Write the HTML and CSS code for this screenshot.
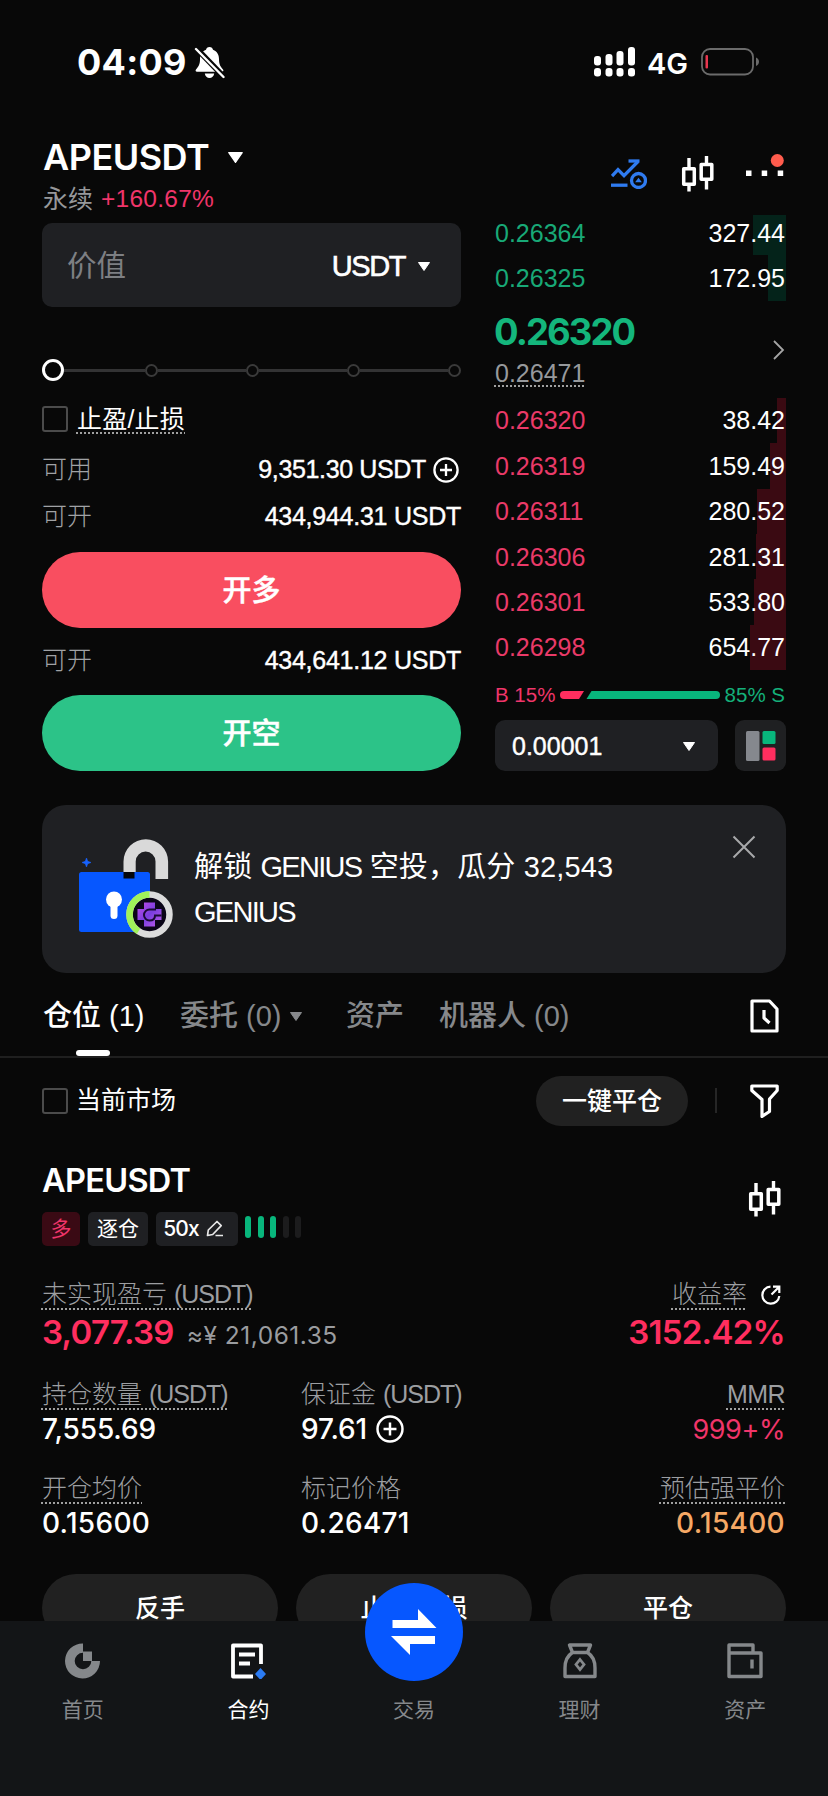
FILE: index.html
```
<!DOCTYPE html>
<html lang="zh-CN">
<head>
<meta charset="utf-8">
<title>APEUSDT 永续</title>
<link rel="stylesheet" href="styles.css">
</head>
<body>
<svg class="defs" width="0" height="0" aria-hidden="true">
  <symbol id="candles" viewBox="0 0 34 36">
    <path d="M8 2v10M8 29v6.500M25.500 0v8M25.500 24v9.500" fill="none" stroke="currentColor" stroke-width="3.400"/>
    <path d="M2.700 12.700h10.600v15.600H2.700zM20.200 8.500h10.600v14.800H20.200z" fill="none" stroke="currentColor" stroke-width="3.500" stroke-linejoin="round"/>
  </symbol>
  <symbol id="plus" viewBox="0 0 26 26">
    <circle cx="13" cy="13" r="11.600" fill="none" stroke="currentColor" stroke-width="2.300"/>
    <path d="M13 7v12M7 13h12" stroke="currentColor" stroke-width="2.300"/>
  </symbol>
  <symbol id="caret" viewBox="0 0 12 9"><path d="M.5.5h11L6 8.500z" fill="currentColor" stroke="currentColor" stroke-linejoin="round"/></symbol>
</svg>
<div class="app">
  <div class="status">
    <span class="time">04:09</span>
    <svg class="bell" width="31" height="33" viewBox="0 0 31 33">
      <path d="M15.500 1c-2 0-3.200 1.300-3.500 2.800C7.800 5.300 6 9 6 13c0 5-1 7-4 10.500-.8 1-.4 2.300 1 2.300h25c1.400 0 1.800-1.300 1-2.300C26 20 25 18 25 13c0-4-1.800-7.700-6-9.200C18.700 2.300 17.500 1 15.500 1z" fill="#fff"/>
      <path d="M10.800 27.500h9.400c-.5 2.800-2.300 4.500-4.700 4.500s-4.200-1.700-4.700-4.500z" fill="#fff"/>
      <path d="M2 2l28 29" stroke="#080808" stroke-width="5.500"/>
      <path d="M2 3l27.500 28" stroke="#fff" stroke-width="2.400" stroke-linecap="round"/>
    </svg>
    <svg class="signal" width="42" height="30" viewBox="0 0 42 30" fill="#fff">
      <rect x="0" y="9" width="7" height="9.500" rx="3"/><rect x="11.500" y="7" width="7" height="11.500" rx="3"/><rect x="22.500" y="4" width="7" height="14.500" rx="3"/><rect x="34" y="0" width="7" height="18.500" rx="3"/>
      <rect x="0" y="21" width="7" height="8.500" rx="3"/><rect x="11.500" y="21" width="7" height="8.500" rx="3"/><rect x="22.500" y="21" width="7" height="8.500" rx="3"/><rect x="34" y="21" width="7" height="8.500" rx="3"/>
    </svg>
    <span class="net">4G</span>
    <svg class="battery" width="59" height="28" viewBox="0 0 59 28">
      <rect x="1" y="1" width="51" height="25.500" rx="8" fill="none" stroke="#6b6b6b" stroke-width="1.800"/>
      <path d="M55 9.500c4 1.500 4 7 0 8.500z" fill="#6b6b6b"/>
      <rect x="4.500" y="7" width="2.500" height="13.500" rx="1" fill="#e8374f"/>
    </svg>
  </div>

  <header class="header">
    <div class="pair">
      <div class="pair-name">APEUSDT <svg class="pair-caret"><use href="#caret"/></svg></div>
      <div class="pair-sub">永续 <span class="red pct">+160.67%</span></div>
    </div>
    <svg class="chart-icon" width="36" height="30" viewBox="0 0 36 30" fill="none" stroke="#2f7bf0" stroke-width="3.300">
      <path d="M1 17l6-6.300 6 6L27 2.500"/><path d="M17.500 2h11"/><path d="M0 26.200h16.500"/><circle cx="27.500" cy="21.500" r="7"/>
      <path d="M27.500 18.800l3.400 4.400h-6.800z" fill="#2f7bf0" stroke="none"/>
    </svg>
    <svg class="candles" width="34" height="36"><use href="#candles"/></svg>
    <svg class="more" width="40" height="24" viewBox="0 0 40 24"><path d="M0 16.500h5.500V22H0zM15.700 16.500h5.500V22h-5.500zM31.700 16.500h5.500V22h-5.500z" fill="#fff"/><circle cx="31.300" cy="6.500" r="6.500" fill="#ff5c4d"/></svg>
  </header>

  <main class="trade">
    <section class="order">
      <div class="input"><span class="ph">价值</span><span class="unit">USDT</span><svg class="caret"><use href="#caret"/></svg></div>
      <div class="slider"><i class="knob"></i><b class="lead"></b><i></i><b></b><i></i><b></b><i></i><b></b><i></i></div>
      <div class="check-row"><i class="box"></i><span class="dotted">止盈/止损</span></div>
      <div class="kv first"><span>可用</span><em>9,351.30 USDT</em><svg class="plus" width="26" height="26"><use href="#plus"/></svg></div>
      <div class="kv"><span>可开</span><em>434,944.31 USDT</em></div>
      <div class="btn long">开多</div>
      <div class="kv after"><span>可开</span><em>434,641.12 USDT</em></div>
      <div class="btn short">开空</div>
    </section>

    <section class="book">
      <div class="lvl bid top"><i style="width:33px"></i><span>0.26364</span><em>327.44</em></div>
      <div class="lvl bid"><i style="width:18px"></i><span>0.26325</span><em>172.95</em></div>
      <div class="mid">
        <div class="prices"><strong>0.26320</strong><span class="dotted">0.26471</span></div>
        <svg width="12" height="20" viewBox="0 0 12 20"><path d="M1 1l9 9-9 9" fill="none" stroke="#a5a5a5" stroke-width="1.800"/></svg>
      </div>
      <div class="lvl ask"><i style="width:9px"></i><span>0.26320</span><em>38.42</em></div>
      <div class="lvl ask"><i style="width:16px"></i><span>0.26319</span><em>159.49</em></div>
      <div class="lvl ask"><i style="width:29px"></i><span>0.26311</span><em>280.52</em></div>
      <div class="lvl ask"><i style="width:30px"></i><span>0.26306</span><em>281.31</em></div>
      <div class="lvl ask"><i style="width:32px"></i><span>0.26301</span><em>533.80</em></div>
      <div class="lvl ask"><i style="width:36px"></i><span>0.26298</span><em>654.77</em></div>
      <div class="ratio">
        <span class="red">B 15%</span>
        <svg width="160" height="8" viewBox="0 0 160 8"><path d="M4 0h20l-5 8H4a4 4 0 0 1 0-8z" fill="#ff2e5f"/><path d="M31.500 0H156a4 4 0 0 1 0 8H26.500z" fill="#08b67c"/></svg>
        <span class="green">85% S</span>
      </div>
      <div class="book-tools">
        <div class="step"><span>0.00001</span><svg class="caret"><use href="#caret"/></svg></div>
        <div class="depth"><svg width="30" height="30" viewBox="0 0 30 30"><rect width="13.500" height="30" rx="1.500" fill="#85888e"/><rect x="16.500" width="13" height="13" rx="1.500" fill="#08b67c"/><rect x="16.500" y="16.500" width="13" height="13" rx="1.500" fill="#ff2e5f"/></svg></div>
      </div>
    </section>
  </main>

  <section class="banner">
    <svg class="lock" width="96" height="102" viewBox="0 0 96 102">
      <defs><linearGradient id="lg" x1="0" y1="0" x2="1" y2="1"><stop offset="0" stop-color="#c04be8"/><stop offset=".5" stop-color="#7a3ee0"/><stop offset="1" stop-color="#c05bea"/></linearGradient></defs>
      <path d="M7.500 19l1.200 3.300L12 23.500l-3.300 1.200-1.200 3.300-1.200-3.300L3 23.500l3.300-1.200z" fill="#1763ff" stroke="#1763ff" stroke-width=".6"/>
      <rect x="0" y="33" width="71" height="60" rx="2.500" fill="#0657ff"/>
      <rect x="44.500" y="33" width="11" height="6.500" fill="#05070c"/>
      <path d="M44.500 33V22.500a22.300 22.300 0 0 1 44.600 0V40H76.500V22.500a9.900 9.900 0 0 0-19.800 0V33z" fill="#d9d9d9"/>
      <circle cx="35" cy="60.500" r="8" fill="#fff"/><rect x="31.500" y="60" width="7" height="20" rx="3.500" fill="#fff"/>
      <circle cx="70.500" cy="75.500" r="20" fill="#0b0618" stroke="#dcdcdc" stroke-width="6.500"/>
      <path d="M70.500 55.500a20 20 0 0 0-11 36.700" fill="none" stroke="#a0f25a" stroke-width="6.500"/>
      <path d="M65 63.500h11v6.500h6.500v11H76v6.500H65V81h-6.500V70H65z" fill="url(#lg)"/>
      <path d="M77 70.500h-6.500a5.500 5.500 0 0 0 0 11c3.500 0 5.500-1.500 5.500-5h6.500" fill="none" stroke="#1b0a38" stroke-width="2"/>
    </svg>
    <p>解锁 <span>GENIUS</span> 空投，瓜分 32,543 <span>GENIUS</span></p>
    <svg class="close" width="24" height="24" viewBox="0 0 24 24"><path d="M1.500 1.500l21 21M22.500 1.500l-21 21" stroke="#a8a9ab" stroke-width="2"/></svg>
  </section>

  <nav class="tabs">
    <span class="tab on">仓位 (1)</span>
    <span class="tab orders">委托 (0) <svg class="caret"><use href="#caret"/></svg></span>
    <span class="tab assets">资产</span>
    <span class="tab">机器人 (0)</span>
    <svg class="history" width="29" height="34" viewBox="0 0 29 34" fill="none" stroke="#fff" stroke-width="3.200" stroke-linejoin="round"><path d="M2 2h17.500L27 10v22H2z"/><path d="M14 11v8l5.500 5"/></svg>
  </nav>

  <div class="filter">
    <i class="box"></i><span class="market">当前市场</span>
    <div class="pill">一键平仓</div>
    <i class="sep"></i>
    <svg width="29" height="34" viewBox="0 0 29 34" fill="none" stroke="#fff" stroke-width="3.200" stroke-linejoin="round"><path d="M1.800 2h25.400v4.500l-7.700 8.500v12.500l-7.500 5V15.500L1.800 6.500z"/></svg>
  </div>

  <section class="position">
    <div class="pos-head">
      <div>
        <h2>APEUSDT</h2>
        <div class="tags">
          <span class="tag side">多</span><span class="tag mode">逐仓</span>
          <span class="tag lev">50x <svg width="18" height="17" viewBox="0 0 18 17" fill="none" stroke="#e8e8e8" stroke-width="1.700" stroke-linejoin="round"><path d="M1.500 15.500l.8-5.500L11 1.500l4.200 4.200-8.500 8.800zM9.500 15.500H17"/></svg></span>
          <span class="adl"><i class="lit"></i><i class="lit"></i><i class="lit"></i><i></i><i></i></span>
        </div>
      </div>
      <svg class="candles" width="34" height="36"><use href="#candles"/></svg>
    </div>

    <div class="pnl">
      <div><label class="dotted">未实现盈亏 <span>(USDT)</span></label><div class="big"><strong>3,077.39</strong><span class="approx">≈¥ 21,061.35</span></div></div>
      <div class="right"><div class="roi"><label class="dotted">收益率</label><svg width="20" height="20" viewBox="0 0 20 20" fill="none" stroke="#fff" stroke-width="2.200"><path d="M9.500 1.700A8.500 8.500 0 1 0 18.300 11M10.500 9.500L17.500 2.500M12 1.700h6.300V8"/></svg></div><div class="big"><strong>3152.42%</strong></div></div>
    </div>

    <div class="stats">
      <div><label class="dotted">持仓数量 <span>(USDT)</span></label><b>7,555.69</b></div>
      <div><label>保证金 <span>(USDT)</span></label><b>97.61 <svg width="28" height="28"><use href="#plus"/></svg></b></div>
      <div class="right"><label class="dotted mmr">MMR</label><b class="red thin">999+%</b></div>
      <div><label class="dotted">开仓均价</label><b class="wide">0.15600</b></div>
      <div><label>标记价格</label><b class="wide">0.26471</b></div>
      <div class="right"><label class="dotted">预估强平价</label><b class="orange wide">0.15400</b></div>
    </div>
    <div class="actions"><span>反手</span><span>止盈/止损</span><span>平仓</span></div>
  </section>

  <footer class="nav">
    <div class="item"><svg width="36" height="36" viewBox="0 0 36 36"><path d="M18 0.500v9.200a8.300 8.300 0 1 0 8.300 8.300H35A17.500 17.500 0 1 1 18 .5z" fill="#85888b"/><path d="M18 8.500h9v9.500h-9z" fill="#85888b"/></svg><span>首页</span></div>
    <div class="item on"><svg width="36" height="36" viewBox="0 0 36 36" fill="none" stroke="#fff" stroke-width="3.800"><path d="M23 33.500H3V2.500h28V21" stroke-linejoin="round"/><path d="M9 11.500h16M9 20.500h11"/><path d="M30.500 25l5.500 6-5.500 6-5.500-6z" fill="#2b7bf3" stroke="none"/></svg><span>合约</span></div>
    <div class="item"><i class="swap"><svg width="48" height="48" viewBox="0 0 48 48" fill="#fff"><path d="M2.500 12h25.500V1L46.500 20H2.500zM45 36H20v11L1 28h44z"/></svg></i><span>交易</span></div>
    <div class="item"><svg width="36" height="36" viewBox="0 0 36 36" fill="none" stroke="#85888b" stroke-width="3.400"><path d="M7.500 2h21L25.500 9.500h-15zM10.500 9.500C5 13 3 19 3 25v8.500h30V25c0-6-2-12-7.500-15.500" stroke-linejoin="round"/><path d="M18 16.500l4 5-4 5-4-5z" stroke-width="2.800"/></svg><span>理财</span></div>
    <div class="item"><svg width="36" height="36" viewBox="0 0 36 36" fill="none" stroke="#85888b" stroke-width="3.400"><path d="M2 10V2h24v8M2 10h32v23.500H2z" stroke-linejoin="round"/><path d="M25 16.500v9"/></svg><span>资产</span></div>
  </footer>
</div>
</body>
</html>
```
FILE: styles.css
```
* { box-sizing: border-box; margin: 0; padding: 0; }
body { background: #080808; }
.defs { position: absolute; }
svg { display: block; flex: none; }
i, em { font-style: normal; }
.app {
  width: 828px; height: 1796px; overflow: hidden;
  background: #080808; color: #fff;
  font-family: "Liberation Sans", "Noto Sans CJK SC", sans-serif;
  font-size: 25px; line-height: 1; white-space: nowrap;
  display: flex; flex-direction: column;
}
.app > * { flex: none; }
.red { color: #f0356a; }
.green { color: #14b07a; }
.orange { color: #f6a865; }
.caret { width: 12px; height: 9px; }
.box { width: 26px; height: 26px; border: 2px solid #4b4b4b; border-radius: 3px; flex: none; }
.dotted { position: relative; }
.dotted::after {
  content: ""; position: absolute; left: -1px; right: 0; bottom: -2px; height: 2px;
  background: repeating-linear-gradient(90deg, #a0a0a0 0 2px, transparent 2px 4px);
}

.status { height: 124px; padding: 0 68px 0 77px; display: flex; align-items: center; font-family: Inter, sans-serif; font-weight: 700; }
.time { font-size: 36px; letter-spacing: 0.3px; width: 117px; }
.bell { margin-right: auto; }
.net { font-size: 29px; font-weight: 600; margin: 2px 13px 0 11px; }

.header { height: 86px; padding: 0 42px 0 43px; display: flex; }
.pair { margin-right: auto; }
.pair-name { display: flex; align-items: center; gap: 19px; height: 66px; font: 600 36px/1 Inter, sans-serif; letter-spacing: -0.500px; }
.pair-caret { width: 15px; height: 11px; }
.pair-sub { display: flex; gap: 8px; align-items: center; height: 18px; color: #96989b; }
.pct { font-size: 24.500px; letter-spacing: 0.250px; }
.chart-icon { margin: 35px 34px 0 0; }
.header .candles { margin: 32px 31px 0 0; }
.more { margin: 30px 0 0; }

.trade { display: flex; padding: 0 42px; justify-content: space-between; }
.order { width: 419px; padding-top: 13px; }
.input { height: 84px; border-radius: 10px; background: #1f2023; display: flex; align-items: center; padding: 2px 31px 0 25px; font-size: 29.500px; }
.ph { color: #7d7f83; margin-right: auto; }
.unit { font-size: 29px; -webkit-text-stroke: .6px #fff; letter-spacing: -1.400px; margin-right: 13px; }
.slider { height: 22px; margin-top: 52px; display: flex; align-items: center; }
.slider i { width: 13px; height: 13px; border: 2.500px solid #3a3a3a; border-radius: 50%; }
.slider .knob { width: 22px; height: 22px; border: 3px solid #fff; }
.slider b { flex: 1; height: 3px; background: #333334; }
.slider .lead { flex: none; width: 81px; }
.check-row { height: 32px; margin-top: 22px; display: flex; align-items: center; gap: 9px; }
.check-row .dotted { letter-spacing: .2px; }
.kv { height: 47px; display: flex; align-items: center; color: #a0a2a5; }
.kv span { margin-right: auto; font-weight: 300; }
.kv em { color: #fff; font-size: 25px; letter-spacing: -0.250px; -webkit-text-stroke: .4px #fff; }
.kv.first { margin-top: 11px; }
.kv.first em { letter-spacing: -0.350px; }
.kv.after { margin-top: 9px; }
.plus { margin: 0 2px 0 7px; color: #fff; }
.btn { height: 76px; border-radius: 38px; display: flex; align-items: center; justify-content: center; font-size: 29px; font-weight: 500; padding-top: 3px; -webkit-text-stroke: .5px #fff; }
.long { background: #f94e60; margin-top: 12px; }
.short { background: #2cc388; margin-top: 11px; }

.book { width: 291px; }
.lvl { height: 45.400px; display: flex; align-items: center; justify-content: space-between; position: relative; padding: 1px 1px 0 0; }
.lvl i { position: absolute; right: 0; top: 0; bottom: 0; }
.lvl.top i { top: 5px; }
.lvl span, .lvl em { position: relative; }
.bid i { background: #04231a; }
.bid span { color: #18a977; }
.ask i { background: #3a0a12; }
.ask span { color: #ea3a68; }
.mid { height: 97px; display: flex; align-items: center; justify-content: space-between; padding: 1px 1px 0 0; }
.prices { display: flex; flex-direction: column; align-items: flex-start; }
.prices strong { font: 700 36.500px/1 Inter, sans-serif; letter-spacing: -1.900px; color: #14b67c; margin: 0 0 10px -1px; }
.prices span { color: #97999c; }
.prices .dotted::after { bottom: -1px; }
.ratio { height: 50px; display: flex; align-items: center; justify-content: space-between; font-size: 20.500px; padding-right: 1px; }
.book-tools { display: flex; justify-content: space-between; }
.step { width: 223px; height: 51px; border-radius: 10px; background: #1f2023; display: flex; align-items: center; justify-content: space-between; padding: 1px 23px 0 17px; -webkit-text-stroke: .4px #fff; }
.depth { width: 51px; height: 51px; border-radius: 9px; background: #1f2022; display: flex; align-items: center; justify-content: center; }

.banner { margin: 34px 42px 0; height: 168px; border-radius: 24px; background: #1f2023; display: flex; padding: 34px 30px 0 37px; }
.banner p { width: 440px; margin: 6px auto 0 19px; font-size: 29px; line-height: 45px; white-space: normal; letter-spacing: .15px; }
.banner p span { letter-spacing: -1.700px; }
.close { margin-top: -4px; }

.tabs { height: 85px; padding: 0 49px 0 43px; display: flex; align-items: center; border-bottom: 2px solid #1f1f1f; font-size: 29px; color: #86888b; }
.tab { display: flex; align-items: center; height: 84px; position: relative; padding-top: 3px; font-weight: 500; gap: 8px; }
.tab.on { color: #fff; width: 137px; }
.tab.on::after { content: ""; position: absolute; left: 33px; bottom: 1px; width: 34px; height: 6px; border-radius: 3px; background: #fff; }
.orders { width: 166px; }
.assets { width: 93px; }
.history { margin: 2px 0 0 auto; }

.filter { height: 85px; padding: 0 49px 0 42px; display: flex; align-items: center; gap: 8px; }
.pill { margin-left: auto; width: 152px; height: 50px; border-radius: 25px; background: #212121; display: flex; align-items: center; justify-content: center; font-weight: 500; padding-top: 1px; }
.sep { width: 2px; height: 25px; background: #262626; margin: 0 25px 0 19px; }

.position { padding: 0 43px 0 42px; }
.pos-head { height: 134px; display: flex; justify-content: space-between; padding-right: 3px; }
.pos-head h2 { font: 600 32.500px/1 Inter, sans-serif; letter-spacing: -0.700px; margin-top: 22px; }
.pos-head .candles { margin-top: 38px; }
.tags { display: flex; align-items: center; margin-top: 14px; gap: 8px; font-size: 21px; }
.tag { height: 34px; border-radius: 5px; background: #1f2023; display: flex; align-items: center; justify-content: center; gap: 7px; }
.side { width: 38px; background: #3a0a14; color: #f0356a; }
.mode { width: 60px; }
.lev { width: 82px; font: 500 21px/1 Inter, sans-serif; letter-spacing: -0.900px; padding-right: 7px; }
.adl { display: flex; gap: 6.500px; margin: 0 0 4px -1px; }
.adl i { width: 6px; height: 22px; border-radius: 3px; background: #1c1c1d; }
.adl .lit { background: #08b67c; }

label { color: #9c9ea1; font-size: 25px; font-weight: 300; display: inline-block; line-height: 27px; }
label span { letter-spacing: -1px; }
label.mmr { letter-spacing: -0.600px; }
.pnl { display: flex; justify-content: space-between; height: 101px; padding-top: 4px; }
.right { text-align: right; display: flex; flex-direction: column; align-items: flex-end; }
.roi { display: flex; align-items: center; gap: 14px; padding-right: 4px; }
.big { display: flex; align-items: baseline; margin-top: 8px; color: #ff2e5f; }
.big strong { font: 600 33px/1 Inter, sans-serif; letter-spacing: -0.700px; }
.approx { color: #9a9c9f; font: 400 24.500px/1 Inter, sans-serif; letter-spacing: 0.500px; margin-left: 13px; }
.stats { display: grid; grid-template-columns: 259px 1fr 1fr; grid-auto-rows: 93.500px; height: 188px; padding-top: 3px; }
.stats b { display: flex; align-items: center; gap: 9px; font: 500 28px/1 Inter, sans-serif; height: 30px; margin-top: 6px; letter-spacing: -0.100px; }
.stats b.wide { letter-spacing: 0.300px; }
.stats b.thin { font-weight: 400; font-size: 27px; letter-spacing: -0.400px; }
.actions { display: flex; gap: 18px; margin: 8px -1px 0 0; height: 47px; overflow: hidden; }
.actions span { flex: 1; height: 68px; border-radius: 34px; background: #212121; display: flex; align-items: center; justify-content: center; font-weight: 500; }

.nav { height: 176px; background: #131517; display: flex; position: relative; }
.item { width: 20%; display: flex; flex-direction: column; align-items: center; padding-top: 22px; color: #85888b; font-size: 21px; }
.item span { margin-top: 20px; }
.item.on { color: #fff; }
.swap { width: 98px; height: 98px; margin: -60px 0 -2px; border-radius: 50%; background: #0657ff; display: flex; align-items: center; justify-content: center; position: relative; }
```
